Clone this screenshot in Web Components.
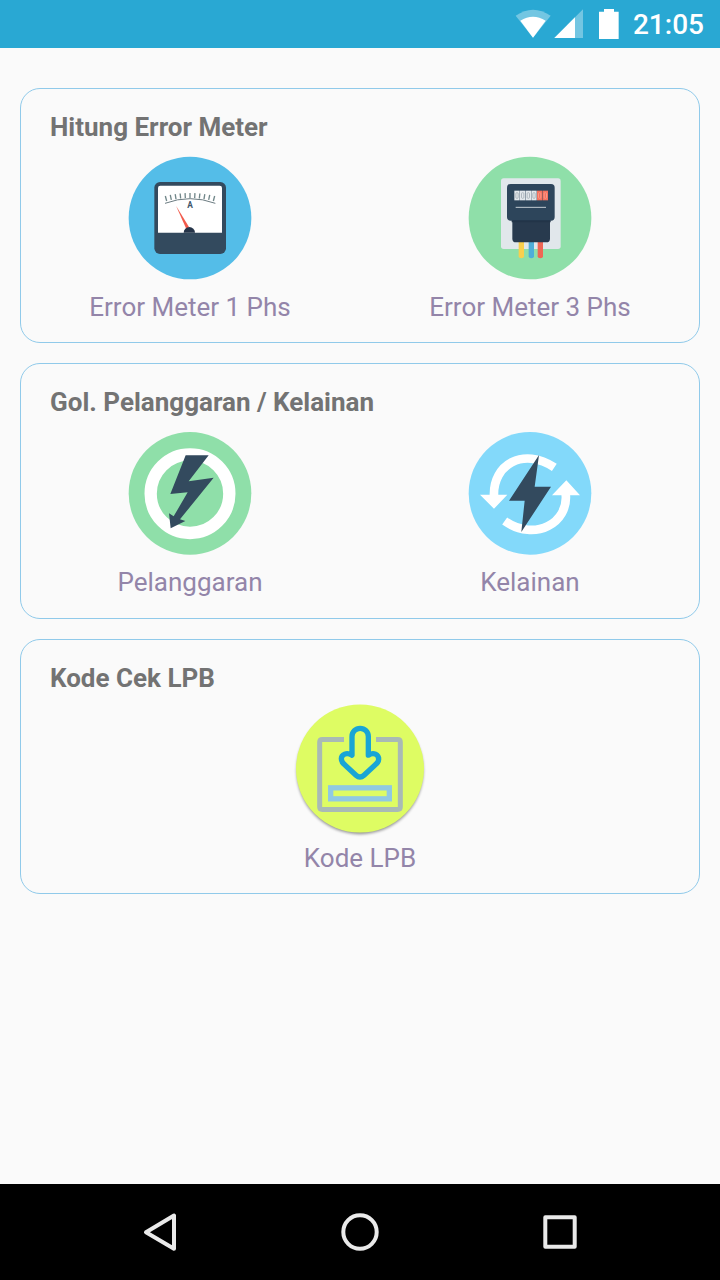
<!DOCTYPE html>
<html lang="id">
<head>
<meta charset="utf-8">
<title>Error Meter</title>
<style>
html,body{margin:0;height:100%}
body{font-family:Roboto,"Noto Sans",sans-serif;background:#fafafa}
</style>
</head>
<body>
<app-screen>
  <status-bar slot="top">21:05</status-bar>
  <menu-card heading="Hitung Error Meter">
    <menu-item icon="ammeter">Error Meter 1 Phs</menu-item>
    <menu-item icon="kwh">Error Meter 3 Phs</menu-item>
  </menu-card>
  <menu-card heading="Gol. Pelanggaran / Kelainan">
    <menu-item icon="violation">Pelanggaran</menu-item>
    <menu-item icon="anomaly">Kelainan</menu-item>
  </menu-card>
  <menu-card heading="Kode Cek LPB">
    <menu-item icon="download">Kode LPB</menu-item>
  </menu-card>
  <nav-bar slot="bottom"></nav-bar>
</app-screen>
<script>
const define = (name, render) => customElements.define(name, class extends HTMLElement {
  connectedCallback() {
    if (!this.shadowRoot) this.attachShadow({ mode: 'open' }).innerHTML = render(this);
  }
});

let ticks = '';
for (let i = 0; i < 11; i++) {
  const t = (i - 5) / 5, x = 210 + t * 70, y = 144 + t * t * 9;
  ticks += `<path d="M${x} ${y}l${t * 4} -15"/>`;
}
let digits = '';
for (let i = 0; i < 6; i++) {
  const x = 163 + i * 17;
  digits += `<rect x="${x}" y="122" width="16" height="29" fill="${i < 4 ? '#e3e8ec' : '#f4725f'}"/>
    <rect x="${x + 4.5}" y="128" width="7" height="17" rx="3" fill="none" stroke="${i < 4 ? '#a3adb5' : '#f9a090'}" stroke-width="2.5"/>`;
}

const icons = {
  ammeter: ['0 0 420 408', 140, `
    <circle cx="210" cy="204" r="184" fill="#54bde8"/>
    <rect x="103" y="96" width="215" height="216" rx="17" fill="#334a5e"/>
    <path d="M114 248V114q0-7 7-7H299q7 0 7 7V248z" fill="#fff"/>
    <path d="M135 160Q210 132 286 160" fill="none" stroke="#6c7c82" stroke-width="3"/>
    <g stroke="#71878a" stroke-width="4">${ticks}</g>
    <text x="210" y="174" text-anchor="middle" font-size="25" font-weight="700" fill="#40566a">A</text>
    <path d="M168 167L207 231 199 237z" fill="#f15b4c"/>
    <path d="M191 248a17 17 0 0 1 34 0z" fill="#253449"/>`],
  kwh: ['0 0 420 408', 140, `
    <circle cx="210" cy="204" r="184" fill="#8fdfa9"/>
    <rect x="123" y="85" width="179" height="212" rx="8" fill="#e1e7eb"/>
    <path d="M176 275h16v44q0 6-8 6t-8-6z" fill="#f9cf4e"/>
    <path d="M206 275h16v44q0 6-8 6t-8-6z" fill="#4faed9"/>
    <path d="M233 275h16v44q0 6-8 6t-8-6z" fill="#ef6654"/>
    <path d="M157 208H270V266q0 11-11 11H168q-11 0-11-11z" fill="#283a4e"/>
    <rect x="141" y="102" width="143" height="110" rx="11" fill="#2d455b"/>
    <path d="M155 211H272V217H155z" fill="#223448"/>
    ${digits}
    <path d="M167 172h91" stroke="#c4cdd3" stroke-width="3"/>`],
  violation: ['0 -1 420 408', 140, `
    <circle cx="210" cy="204" r="184" fill="#8fdfa9"/>
    <circle cx="210" cy="205" r="118" fill="none" stroke="#fff" stroke-width="37"/>
    <path d="M197 90H266L206 168 281 157 180 282 196 287 152 309 147 264 161 273 203 201 151 206z" fill="#334a5e"/>`],
  anomaly: ['0 -1 420 408', 140, `
    <circle cx="210" cy="204" r="184" fill="#83d9fa"/>
    <g fill="none" stroke="#fff" stroke-width="26">
      <path d="M102 212C98 118 190 64 283 126"/>
      <path d="M317 205C327 291 226 351 134 287"/>
    </g>
    <path d="M60 208H142L102 250zM319 165L360 210H276z" fill="#fff"/>
    <path d="M237 89L224 184H273L184 320 194 226H147z" fill="#334a5e"/>`],
  download: ['0 16.500 450 408', 150, `
    <defs><filter id="shade" x="-10%" y="-10%" width="120%" height="125%"><feGaussianBlur stdDeviation="5"/></filter></defs>
    <circle cx="225" cy="226" r="190" fill="#000" opacity=".42" filter="url(#shade)"/>
    <circle cx="225" cy="219" r="192" fill="#defc63"/>
    <path d="M177 132H112q-8 0-8 8V334q0 8 8 8H338q8 0 8-8V140q0-8-8-8H273" fill="none" stroke="#a9bab5" stroke-width="15"/>
    <rect x="137" y="277" width="176" height="33" fill="none" stroke="#90c9e2" stroke-width="16"/>
    <path d="M201 179V123a24.500 24.500 0 0 1 49 0V179C266 169 281 177 281 191Q281 198 274 205L237 239Q225 250 213 239L176 205Q169 198 169 190C169 177 185 169 201 179z" fill="#defc63" stroke="#19a5d5" stroke-width="16" stroke-linejoin="round"/>`]
};

define('app-screen', () => `
  <style>
    :host{display:flex;flex-direction:column;height:1280px;width:720px;background:#fafafa;overflow:hidden}
    main{flex:1;display:flex;flex-direction:column;gap:20px;padding:40px 20px 0}
  </style>
  <slot name="top"></slot><main><slot></slot></main><slot name="bottom"></slot>`);

define('status-bar', () => `
  <style>
    :host{display:flex;align-items:center;justify-content:flex-end;height:48px;box-sizing:border-box;padding-right:16px;background:#29a8d3;color:#fff;font-size:28px;font-weight:500;line-height:32px}
    svg{display:block;margin-right:12px}
    span{padding-top:2px}
  </style>
  <svg width="106" height="48" viewBox="45 0 318 144" fill="#fff">
    <path d="M47 47Q99 11 152 47L99 113z" opacity=".35"/>
    <path d="M61 62Q99 38 137 62L99 113z"/>
    <path d="M249 28V114H163z" opacity=".35"/>
    <path d="M225 52V114H163z"/>
    <path d="M297 35H312V27H342V35H356V117H297z"/>
  </svg><span><slot></slot></span>`);

define('menu-card', el => `
  <style>
    :host{display:block;box-sizing:border-box;height:255.330px;border:1px solid #90caea;border-radius:20px;padding:23px 0 0}
    h2{margin:0 29px;font-size:26px;line-height:30px;font-weight:700;color:#737373}
    div{display:flex;margin:8px -1px 0}
  </style>
  <h2>${el.getAttribute('heading')}</h2><div><slot></slot></div>`);

define('menu-item', el => {
  const [box, width, art] = icons[el.getAttribute('icon')];
  return `
  <style>
    :host{flex:1;display:flex;flex-direction:column;align-items:center;gap:6px;font-size:26px;line-height:30px;color:#9385a9}
    svg{display:block;overflow:visible}
  </style>
  <svg width="${width}" height="136" viewBox="${box}">${art}</svg><span><slot></slot></span>`;
});

define('nav-bar', () => `
  <style>
    :host{display:flex;justify-content:center;gap:152px;align-items:center;height:96px;background:#000}
    svg{width:48px;height:48px;fill:none;stroke:#eaeaea;stroke-width:4;stroke-linejoin:round}
  </style>
  <svg viewBox="0 0 48 48"><path d="M10 24.200L38 7.500V40.800z"/></svg>
  <svg viewBox="0 0 48 48"><circle cx="24" cy="24" r="16.700"/></svg>
  <svg viewBox="0 0 48 48"><rect x="9.300" y="9.300" width="29.400" height="29.400"/></svg>`);
</script>
</body>
</html>
